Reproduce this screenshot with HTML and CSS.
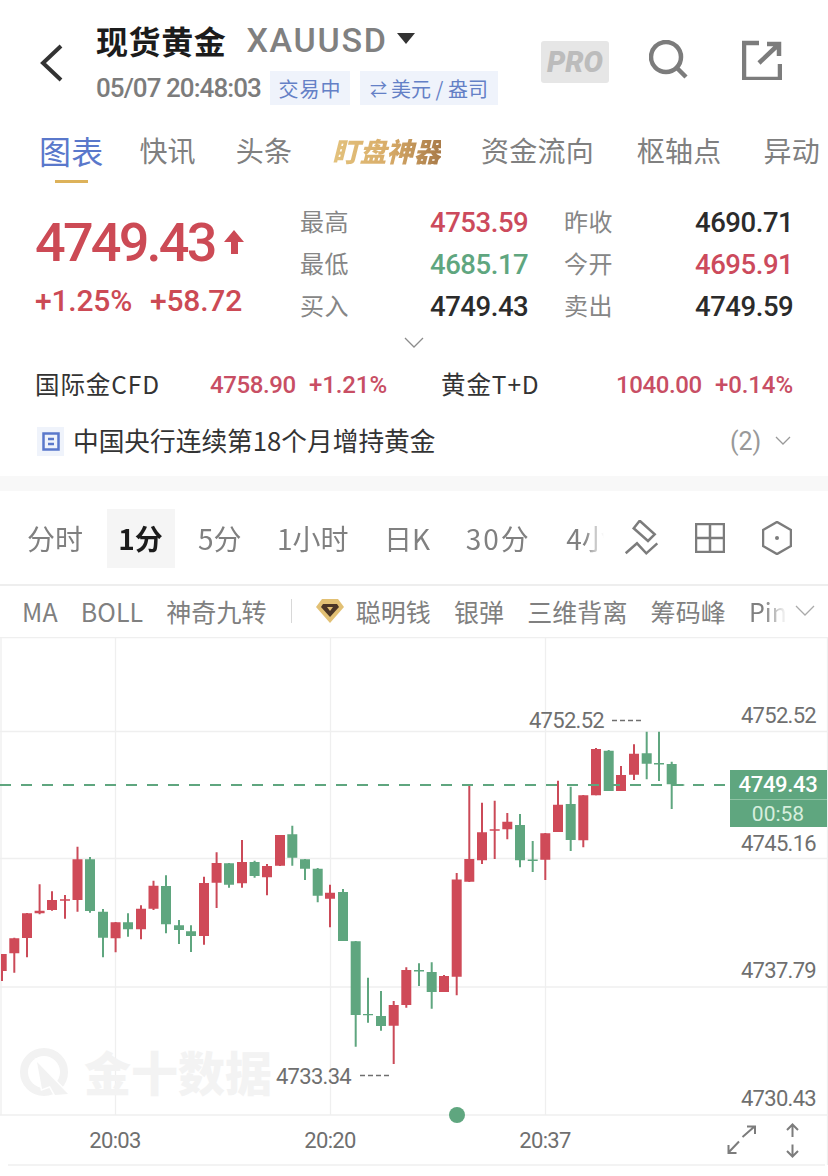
FILE: index.html
```html
<!DOCTYPE html>
<html lang="zh">
<head>
    <meta charset="utf-8">
    <title>现货黄金 XAUUSD</title>
    <link rel="stylesheet" href="styles.css">
</head>
<body>
    <div class="page">
        <header class="top-bar">
            <svg class="back-icon" width="24" height="38" viewBox="0 0 24 38"><path d="M21 2L3 19l18 17"/></svg>
            <div class="title-block">
                <div class="title-line">
                    <span class="title-cn">现货黄金</span>
                    <span class="title-code">XAUUSD</span>
                    <span class="title-caret"></span>
                </div>
                <div class="status-line">
                    <span class="clock">05/07 20:48:03</span>
                    <span class="tag tag-state">交易中</span>
                    <span class="tag tag-unit"><i>⇄</i> 美元 / 盎司</span>
                </div>
            </div>
            <div class="pro-badge"><span>PRO</span></div>
            <svg class="top-icon search-icon" width="40" height="40" viewBox="0 0 40 40"><circle cx="17" cy="17" r="15"/><path d="M28 28l9 9"/></svg>
            <svg class="top-icon share-icon" width="40" height="40" viewBox="0 0 40 40"><path d="M17 3H2v36h36V24"/><path d="M17 23L36 5M25 4h12v12"/></svg>
        </header>

        <nav class="main-tabs">
            <a class="main-tab active">图表</a>
            <a class="main-tab">快讯</a>
            <a class="main-tab">头条</a>
            <a class="main-tab gold">盯盘神器</a>
            <a class="main-tab">资金流向</a>
            <a class="main-tab pivot">枢轴点</a>
            <a class="main-tab moves">异动</a>
        </nav>

        <section class="quote">
            <div class="quote-main">
                <div class="price">4749.43<svg class="price-arrow" width="22" height="26" viewBox="0 0 22 26"><path d="M11 1l10 12h-6v12H8V13H1z"/></svg></div>
                <div class="change"><span>+1.25%</span><span>+58.72</span></div>
            </div>
            <div class="stats">
                <span class="stat-label">最高</span><span class="stat-value up">4753.59</span>
                <span class="stat-label">昨收</span><span class="stat-value">4690.71</span>
                <span class="stat-label">最低</span><span class="stat-value down">4685.17</span>
                <span class="stat-label">今开</span><span class="stat-value up">4695.91</span>
                <span class="stat-label">买入</span><span class="stat-value">4749.43</span>
                <span class="stat-label">卖出</span><span class="stat-value">4749.59</span>
            </div>
        </section>
        <svg class="more-chevron" width="20" height="12" viewBox="0 0 20 12"><path d="M1 1l9 9 9-9"/></svg>

        <div class="related">
            <span class="related-name name-a">国际金CFD</span>
            <span class="related-price price-a">4758.90</span>
            <span class="related-pct pct-a">+1.21%</span>
            <span class="related-name name-b">黄金T+D</span>
            <span class="related-price price-b">1040.00</span>
            <span class="related-pct">+0.14%</span>
        </div>

        <div class="news">
            <span class="news-icon"><svg width="18" height="19" viewBox="0 0 18 19"><path d="M1.5 1.5h15v16h-15z"/><path class="news-lines" d="M6 7h6M6 12h6"/></svg></span>
            <span class="news-text">中国央行连续第18个月增持黄金</span>
            <span class="news-count">(2)</span>
            <svg class="news-chevron" width="16" height="10" viewBox="0 0 16 10"><path d="M1 1l7 7 7-7"/></svg>
        </div>

        <div class="band"></div>

        <div class="periods">
            <div class="period-list">
                <span class="period">分时</span>
                <span class="period active">1分</span>
                <span class="period">5分</span>
                <span class="period">1小时</span>
                <span class="period">日K</span>
                <span class="period wide">30分</span>
                <span class="period">4小</span>
            </div>
            <svg class="tool-icon" width="36" height="36" viewBox="0 0 36 36"><path d="M15.7.7l15 13.6-6.7 6.7L9.7 8.3z"/><path d="M1.7 33.3L13 23.3l9.3 10 11-10"/></svg>
            <svg class="tool-icon" width="30" height="30" viewBox="0 0 30 30"><path d="M1 1h28v28H1zM15 1v28M1 15h28"/></svg>
            <svg class="tool-icon" width="30" height="34" viewBox="0 0 30 34"><path d="M15 1l14 8v16l-14 8-14-8V9z"/><circle class="tool-dot" cx="15" cy="17" r="2"/></svg>
        </div>

        <div class="indicators">
            <span class="indicator">MA</span>
            <span class="indicator">BOLL</span>
            <span class="indicator">神奇九转</span>
            <span class="ind-sep"></span>
            <svg class="gem-icon" width="30" height="26" viewBox="0 0 30 26"><path class="gem-outer" d="M7 1h16l6 8-14 16L1 9z"/><path class="gem-inner" d="M8 6h14l2 3-9 10L6 9z"/><path class="gem-cut" d="M12 9h6l-3 4z"/></svg>
            <span class="indicator after-gem">聪明钱</span>
            <span class="indicator">银弹</span>
            <span class="indicator">三维背离</span>
            <span class="indicator">筹码峰</span>
            <span class="indicator fade-out">Pin</span>
            <svg class="ind-chevron" width="20" height="12" viewBox="0 0 20 12"><path d="M1 1l9 9 9-9"/></svg>
        </div>

        <svg class="chart" width="828" height="539" viewBox="0 637 828 539">
            <g class="grid">
                <path d="M0 637.5H828M0 731.5H828M0 858.5H828M0 987H828M0 1115H828M8 1165H825"/>
                <path d="M1 637V1115M115.5 637V1115M330.5 637V1115M545.5 637V1115M827.5 637V1165"/>
            </g>

            <g class="watermark">
                <circle class="mark-ring" cx="44" cy="1072" r="20"/>
                <path class="mark-cut" d="M37 1062l31 32-13 1-5-9-8 3z"/>
                <text class="mark-text" x="84" y="1091">金十数据</text>
            </g>

            <path class="wick red" d="M2 954V981M14.3 937.7V972.7M27 913V957.3M39.6 884.3V914.3M52 891.3V910.7M65 895V918.7M77.5 846.7V911.7M115.6 922V952.3M141 905.3V939.3M153.5 880.7V910M204 876.7V944.7M216.6 852.3V908M242 840V887.7M267 864V895.3M280 835V866M330 884.7V927.3M393.7 1001V1064M406.3 967.3V1007.7M444 975V992M456.7 873V995.3M469.3 785V882M482 802.7V864M494.7 800.7V859M507.3 813V839.3M545.3 833V880M558 780.7V832M583.3 795V847.3M596 748V795.3M621 766V791M634 744.3V780"/>
            <path class="body red" d="M1 954h5.7v17H1zM9.3 938.3h10v15h-10zM22 913.3h10V938H22zM34.6 910.7h10v2.6h-10zM47 900h10v10H47zM60 899.3h10v1.4H60zM72.5 859.3h10V900h-10zM110.6 922.3h10v16h-10zM136 908.7h10v20.6h-10zM148.5 885.7h10v23h-10zM199 883h10v53h-10zM211.6 863h10v19.7h-10zM237 862h10v21.3h-10zM262 866h10v11.3h-10zM275 835h10v30.7h-10zM325 892.7h10v6h-10zM388.7 1005h10v20.7h-10zM401.3 970h10v35h-10zM439 976h10v16h-10zM451.7 879.5h10v97.2h-10zM464.3 859h10v22.7h-10zM477 832.3h10v28h-10zM489.7 829.3h10v1.4h-10zM502.3 821.7h10v7.6h-10zM540.3 833.3h10v26.4h-10zM553 804.7h10V832h-10zM578.3 795.3h10v45h-10zM591 749h10v46.3h-10zM616 775h10v16h-10zM629 753.7h10v21h-10z"/>
            <path class="wick green" d="M90 857V912.7M103 909V957.3M128 913.3V936.7M166 875.3V933.3M179 920V944M191 925.3V952M229 863V887.7M254.6 860.7V877.7M292.3 825.7V865.7M305 859V880M317.7 868V902.3M343 889V941M355.7 941V1046.7M368 977.7V1022.7M381 991V1030.7M419 963.3V986M431.7 962.3V1008.7M520 814V867.3M532.7 841V872M570.7 786.7V851M608.7 750V791M646.7 731.7V779.3M659 731.7V781M671.7 761.7V809"/>
            <path class="body green" d="M85 859.3h10V911H85zM98 911.7h10v26H98zM123 922.3h10v7h-10zM161 886h10v38.3h-10zM174 925.3h10v4.7h-10zM186 931.3h10v4.7h-10zM224 863.3h10v21.4h-10zM249.6 862h10v14h-10zM287.3 834.3h10v23.4h-10zM300 859.3h10v9.4h-10zM312.7 868.7h10v27h-10zM338 892h10v49h-10zM350.7 941.3h10V1015h-10zM363 1014h10v1.2h-10zM376 1016h10v10h-10zM414 970h10v1.4h-10zM426.7 972h10v20h-10zM515 825h10v35.3h-10zM527.7 859.6h10v1.4h-10zM565.7 804h10v36h-10zM603.7 750.7h10V791h-10zM641.7 753.3h10v10.4h-10zM654 763h10v1.4h-10zM666.7 764h10v20.3h-10zM679.3 784.3h5v1.4h-5z"/>

            <path class="last-line" d="M0 785H730"/>

            <g class="peak">
                <text x="604" y="728" text-anchor="end">4752.52</text>
                <path d="M612 720.5H644"/>
                <text x="351" y="1084" text-anchor="end">4733.34</text>
                <path d="M360 1075.5H391"/>
            </g>

            <g class="axis">
                <text x="816" y="723" text-anchor="end">4752.52</text>
                <text x="816" y="851" text-anchor="end">4745.16</text>
                <text x="816" y="978" text-anchor="end">4737.79</text>
                <text x="816" y="1106" text-anchor="end">4730.43</text>
                <text x="115" y="1148" text-anchor="middle">20:03</text>
                <text x="330" y="1148" text-anchor="middle">20:20</text>
                <text x="545" y="1148" text-anchor="middle">20:37</text>
            </g>

            <rect class="last-box" x="730" y="770" width="97" height="57"/>
            <path class="last-split" d="M730 799.5H827"/>
            <text class="last-price" x="778" y="792" text-anchor="middle">4749.43</text>
            <text class="last-time" x="778" y="821" text-anchor="middle">00:58</text>

            <circle class="slider-dot" cx="457" cy="1115" r="8"/>

            <g class="chart-tools">
                <path d="M742.5 1137L754.5 1126.5M747 1126.5h8v7.5M739 1141.5L728.5 1152.5M728.5 1145v8h8"/>
                <path d="M792.5 1125V1137M787 1130l5.500-5.500 5.500 5.500M792.5 1144.500V1156.500M787 1151l5.500 5.500 5.500-5.500"/>
            </g>
        </svg>
    </div>
</body>
</html>
```

FILE: styles.css
```css
* {
    box-sizing: border-box;
}

html, body {
    margin: 0;
    padding: 0;
    background-color: white;
}

body {
    font-family: Roboto, 'Noto Sans CJK SC', sans-serif;
    color: #7c7c7c;
}

svg {
    display: block;
    flex: none;
    fill: none;
}

.page {
    position: relative;
    width: 828px;
    height: 1176px;
    overflow: hidden;
}

/* top bar */
.top-bar {
    display: flex;
    align-items: flex-start;
    height: 112px;
    padding: 18px 0 0 40px;
}

.back-icon {
    margin-top: 26px;
    stroke: #333;
    stroke-width: 4;
}

.title-block {
    margin-left: 32px;
    width: 421px;
}

.title-line {
    display: flex;
    align-items: center;
    height: 44px;
}

.title-cn {
    font-family: 'Noto Sans CJK SC', sans-serif;
    font-size: 32px;
    font-weight: 700;
    letter-spacing: 0.6px;
    color: #1c1c1c;
}

.title-code {
    margin-left: 20px;
    font-family: Roboto, sans-serif;
    font-size: 34px;
    font-weight: 500;
    letter-spacing: 1.7px;
    color: #808080;
}

.title-caret {
    width: 0;
    height: 0;
    margin-left: 9px;
    margin-top: -4px;
    border-left: 9px solid transparent;
    border-right: 9px solid transparent;
    border-top: 11px solid #333;
}

.status-line {
    display: flex;
    align-items: center;
    margin-top: 9px;
}

.clock {
    font-size: 26px;
    font-weight: 500;
    letter-spacing: -0.95px;
    white-space: nowrap;
    width: 174px;
}

.tag {
    display: flex;
    align-items: center;
    justify-content: center;
    height: 34px;
    font-family: 'Noto Sans CJK SC', sans-serif;
    font-size: 20px;
    color: #6480c6;
    background-color: #eff3fb;
    white-space: nowrap;
}

.tag i {
    font-style: normal;
    font-size: 17px;
    margin-right: 4px;
}

.tag-state {
    width: 80px;
    letter-spacing: 1px;
}

.tag-unit {
    width: 138px;
    margin-left: 10px;
}

.pro-badge {
    display: flex;
    align-items: center;
    justify-content: center;
    width: 68px;
    height: 42px;
    margin-top: 23px;
    margin-left: 24px;
    background-color: #e6e6e6;
    border-radius: 3px;
}

.pro-badge span {
    font-size: 29px;
    font-weight: 900;
    font-style: italic;
    color: #bcbcbc;
}

.top-icon {
    margin-top: 22px;
    stroke: #7c7c7c;
}

.search-icon {
    margin-left: 40px;
    stroke-width: 4.5;
}

.share-icon {
    margin-left: 53px;
    stroke-width: 4.5;
}

/* main tabs */
.main-tabs {
    display: flex;
    align-items: center;
    gap: 40px;
    height: 72px;
    padding-left: 39px;
    padding-top: 4px;
    font-family: 'Noto Sans CJK SC', sans-serif;
    white-space: nowrap;
}

.main-tab {
    position: relative;
    font-size: 28px;
    letter-spacing: 0.2px;
    color: #808080;
}

.main-tab.active {
    margin-right: -4px;
    font-size: 32px;
    color: #5a78cb;
}

.main-tab.active::after {
    content: '';
    position: absolute;
    left: 16px;
    bottom: -10px;
    width: 33px;
    height: 3px;
    background-color: #ddb25a;
}

.main-tab.gold {
    font-size: 27px;
    font-weight: 900;
    font-style: italic;
    background: linear-gradient(90deg, #e3c27d, #d9ad69 50%, #a97b49);
    -webkit-background-clip: text;
    background-clip: text;
    color: transparent;
}

.main-tab.pivot {
    margin-left: 3px;
}

.main-tab.moves {
    margin-left: 2px;
}

/* quote */
.quote {
    display: flex;
    height: 150px;
    padding-left: 35px;
    padding-top: 16px;
}

.quote-main {
    width: 265px;
    padding-top: 12px;
}

.price {
    display: flex;
    align-items: center;
    height: 60px;
    font-size: 54px;
    font-weight: 500;
    letter-spacing: -2.8px;
    color: #cc4a55;
}

.price-arrow {
    margin-left: 8px;
    fill: #cc4a55;
}

.change {
    display: flex;
    gap: 18px;
    margin-top: 11px;
    font-size: 30px;
    font-weight: 500;
    letter-spacing: -0.2px;
    color: #cc4a55;
}

.stats {
    display: grid;
    grid-template-columns: 130px 98px 167px 98px;
    grid-template-rows: repeat(3, 42px);
    align-items: center;
    height: 126px;
}

.stats .stat-label:nth-child(4n+3) {
    margin-left: 36px;
}

.stat-label {
    margin-bottom: 2px;
    font-family: 'Noto Sans CJK SC', sans-serif;
    font-size: 24px;
    letter-spacing: 0.4px;
    color: #868686;
}

.stat-value {
    margin-top: 3px;
    font-size: 27.5px;
    font-weight: 500;
    letter-spacing: -0.45px;
    color: #2b2b2b;
    white-space: nowrap;
}

.stat-value.up {
    color: #cc4a5c;
}

.stat-value.down {
    color: #5fa67f;
}

.more-chevron {
    stroke: #8c8c8c;
    stroke-width: 1.3;
    margin: 3px 0 0 404px;
}

/* related quotes */
.related {
    display: flex;
    align-items: center;
    height: 40px;
    margin-top: 16px;
    padding-left: 35px;
    white-space: nowrap;
}

.related-name {
    margin-bottom: 4px;
    font-family: 'Noto Sans CJK SC', sans-serif;
    font-size: 24.5px;
    letter-spacing: 0.9px;
    color: #333;
}

.name-a {
    width: 175px;
}

.name-b {
    width: 175px;
}

.related-price {
    font-size: 24px;
    font-weight: 500;
    letter-spacing: -0.4px;
    color: #c84e64;
    width: 99px;
}

.related-pct {
    font-size: 24px;
    font-weight: 500;
    letter-spacing: -0.1px;
    color: #c84e64;
}

.pct-a {
    width: 132px;
}

/* news line */
.news {
    position: relative;
    display: flex;
    align-items: center;
    height: 30px;
    margin-top: 21px;
    padding-left: 37px;
    white-space: nowrap;
}

.news-icon {
    display: flex;
    align-items: center;
    justify-content: center;
    width: 27px;
    height: 29px;
    background-color: #eff3fb;
}

.news-icon svg {
    stroke: #5a78cb;
    stroke-width: 2.5;
}

.news-text {
    margin-left: 9px;
    margin-bottom: 4px;
    font-family: 'Noto Sans CJK SC', sans-serif;
    font-size: 25.7px;
    color: #333;
}

.news-count {
    font-size: 25px;
    color: #999;
    position: absolute;
    left: 730px;
}

.news-chevron {
    stroke: #999;
    stroke-width: 1.3;
    position: absolute;
    left: 775px;
}

.band {
    height: 15px;
    margin-top: 20px;
    background-color: #f8f8f8;
}

/* period bar */
.periods {
    display: flex;
    align-items: center;
    height: 95px;
    border-bottom: 2px solid #eeeeee;
}

.period-list {
    display: flex;
    align-items: center;
    width: 622px;
    height: 59px;
    margin-top: 1px;
    padding-left: 15px;
    font-family: 'Noto Sans CJK SC', sans-serif;
    font-size: 28px;
    white-space: nowrap;
    -webkit-mask-image: linear-gradient(90deg, black 584px, transparent 604px);
    mask-image: linear-gradient(90deg, black 584px, transparent 604px);
}

.period {
    display: flex;
    flex: none;
    align-items: center;
    justify-content: center;
    height: 59px;
    padding: 0 12px;
    margin-right: 11.5px;
    color: #808080;
}

.period.wide {
    letter-spacing: 2px;
}

.period.active {
    width: 68px;
    padding: 0;
    font-weight: 700;
    color: #1c1c1c;
    background-color: #f5f5f5;
}

.tool-icon {
    stroke: #7c7c7c;
    stroke-width: 2.5;
}

.periods .tool-icon:nth-child(2) {
    margin-left: 2px;
}

.periods .tool-icon:nth-child(3) {
    margin-left: 35px;
}

.periods .tool-icon:nth-child(4) {
    margin-left: 37px;
}

.tool-dot {
    fill: #7c7c7c;
    stroke: none;
}

/* indicator bar */
.indicators {
    display: flex;
    align-items: center;
    height: 50px;
    padding-left: 22px;
    font-size: 25px;
    white-space: nowrap;
    font-family: 'Noto Sans CJK SC', sans-serif;
}

.indicator {
    margin-right: 23px;
    color: #808080;
    letter-spacing: 0.1px;
}

.ind-sep {
    width: 1px;
    height: 24px;
    margin-left: 1px;
    background-color: #d8d8d8;
}

.gem-icon {
    margin-left: 23px;
}

.gem-outer {
    fill: #e2c074;
}

.gem-inner {
    fill: #4a3526;
}

.gem-cut {
    fill: #e2c074;
}

.after-gem {
    margin-left: 11px;
}

.fade-out {
    -webkit-mask-image: linear-gradient(90deg, black 40%, transparent 100%);
    mask-image: linear-gradient(90deg, black 40%, transparent 100%);
    margin-right: 8px;
}

.ind-chevron {
    stroke: #aaa;
    stroke-width: 1.3;
}

/* chart */
.chart {
    position: absolute;
    left: 0;
    top: 637px;
}

.grid path {
    stroke: #efefef;
    stroke-width: 1.3;
}

.mark-ring {
    stroke: #f2f2f2;
    stroke-width: 8;
}

.mark-cut {
    fill: #f2f2f2;
    stroke: white;
    stroke-width: 3;
    paint-order: stroke;
}

.mark-text {
    font-family: 'Noto Sans CJK SC', sans-serif;
    font-size: 47px;
    font-weight: 900;
    fill: #f3f3f3;
}

.wick {
    stroke-width: 2;
}

.wick.red {
    stroke: #cb4a58;
}

.wick.green {
    stroke: #5fa67f;
}

.body.red {
    fill: #cf4a58;
}

.body.green {
    fill: #5fa67f;
}

.last-line {
    stroke: #5fa67f;
    stroke-width: 2;
    stroke-dasharray: 11 10;
}

.peak text,
.axis text {
    font-size: 22px;
    letter-spacing: -0.7px;
    fill: #6f6f6f;
}

.peak path {
    stroke: #6f6f6f;
    stroke-width: 1.5;
    stroke-dasharray: 5 3;
}

.last-box {
    fill: #5fa67f;
}

.last-split {
    stroke: #8fc3a4;
    stroke-width: 1;
}

.last-price {
    font-size: 22px;
    font-weight: 500;
    fill: white;
    letter-spacing: -0.3px;
}

.last-time {
    font-size: 21px;
    fill: #d6eedd;
}

.slider-dot {
    fill: #5fa67f;
}

.chart-tools path {
    stroke: #7c7c7c;
    stroke-width: 2;
}
```
